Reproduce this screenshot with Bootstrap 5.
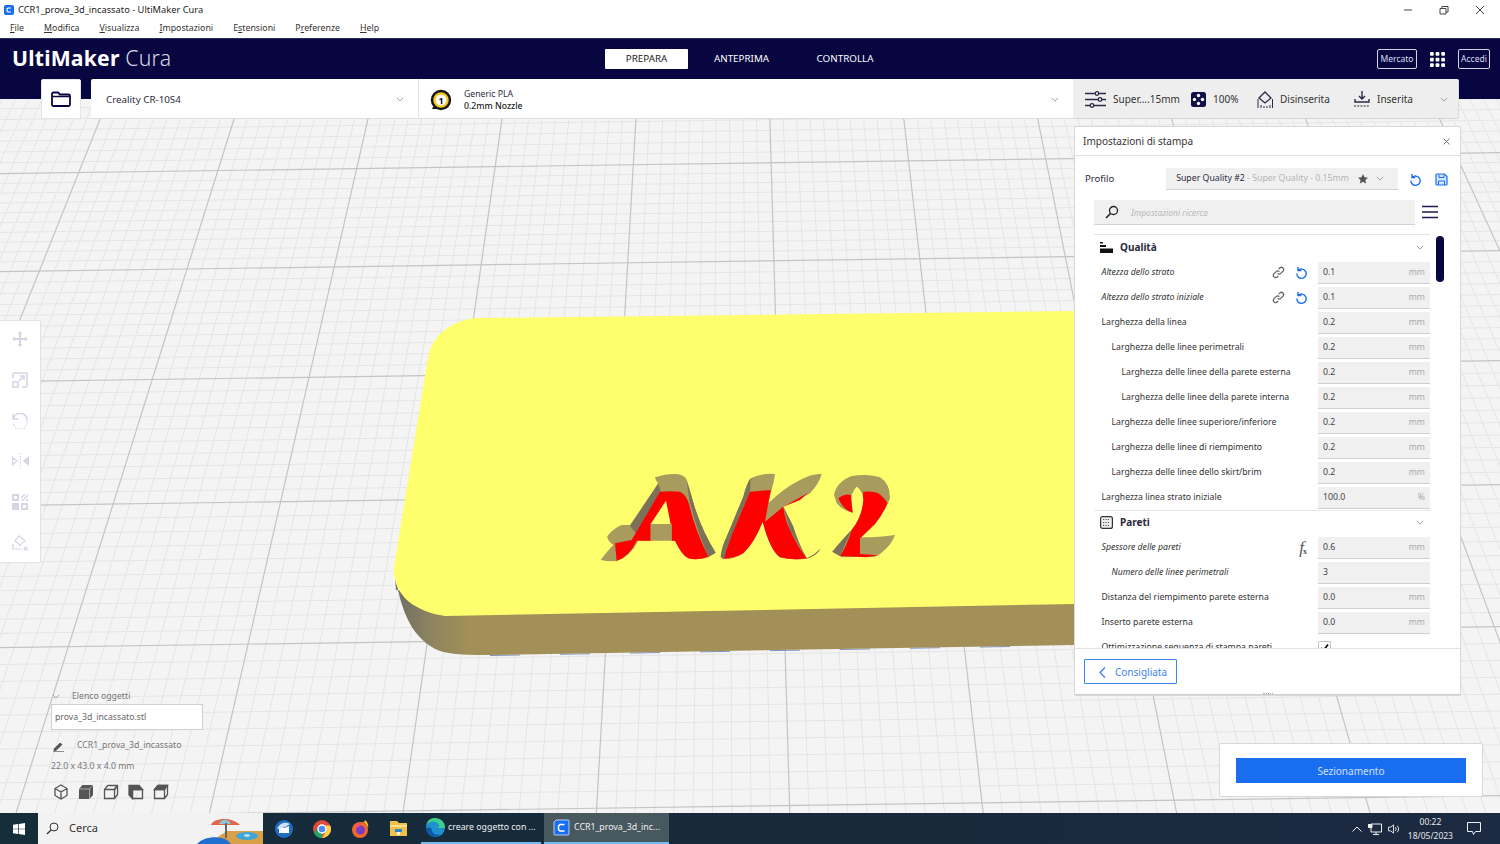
<!DOCTYPE html>
<html lang="it">
<head>
<meta charset="UTF-8">
<title>CCR1_prova_3d_incassato - UltiMaker Cura</title>
<link rel="stylesheet" href="https://cdn.jsdelivr.net/npm/bootstrap@5.3.0/dist/css/bootstrap.min.css">
<style>
html, body { height: 100%; overflow: hidden; }
body { font-family: "Noto Sans", sans-serif; font-size: 9px; color: #2c2c3c; background: #f4f4f4; width: 1500px; height: 844px; }
svg { display: block; flex: none; }
.win-title { height: 19px; background: #fff; padding: 0 2px 0 4px; font-size: 9.3px; color: #222; }
.win-ctrl { width: 36px; }
.win-menu { height: 19px; background: #fff; font-size: 8.8px; color: #333; padding-left: 10px; gap: 20px; }
.win-menu u { text-underline-offset: 1px; }
.work { height: 775px; }
.scene { position: absolute; inset: 0; }
.cura-head { height: 61px; background: #080640; position: relative; color: #fff; padding: 0 10px 20px 12px; border-top: 1px solid #2a2860; }
.logo-text { font-size: 21.2px; line-height: 1; letter-spacing: .2px; font-weight: 700; padding-bottom: 2px; }
.logo-text span { font-weight: 300; color: #d8d8e4; }
.stage-tabs { position: absolute; left: 605px; top: 10px; }
.stage-tab { height: 20px; font-size: 9.8px; color: #fff; display: flex; align-items: center; justify-content: center; }
.stage-tab.on { background: #fff; color: #222; border-radius: 1px; width: 83px; }
.stage-tab.wide { width: 57px; margin-left: 25px; }
.stage-tab.ctl { width: 60px; margin-left: 45px; }
.head-actions { gap: 13px; }
.head-btn { height: 20px; border: 1px solid #d4d4e0; border-radius: 2px; font-size: 8.5px; display: flex; align-items: center; justify-content: center; color: #dcdcec; }
.head-btn.market { width: 40px; }
.head-btn.login { width: 32px; }
.tool-row { position: relative; margin-top: -20px; height: 40px; padding-left: 41px; }
.folder-btn { width: 40px; height: 40px; background: #fff; border-radius: 2px; border: 1px solid #e4e4e4; margin-right: 10px; }
.machine-box { width: 328px; background: #fff; border-right: 1px solid #e2e2e2; font-size: 9.8px; padding: 1px 14px 0 15px; border-radius: 2px 0 0 2px; border-bottom: 1px solid #ddd; }
.machine-box span { padding-top: 2px; }
.material-box { width: 654px; background: #fff; padding: 2px 14px 0 11px; font-size: 8.7px; line-height: 11.5px; border-bottom: 1px solid #ddd; }
.material-box b { font-weight: 500; color: #222; }
.material-text { margin-left: 4px; padding-top: 2px; }
.print-box { width: 386px; background: #eeeeee; border-radius: 0 2px 2px 0; border-bottom: 1px solid #d5d5d5; border-right: 1px solid #ddd; padding: 1px 0 0 12px; font-size: 10px; color: #333; }
.print-box svg { margin-right: 7px; }
.print-box svg.tail { margin-right: 10px; margin-left: auto; }
.pb-super { width: 78px; }
.pb-infill { width: 44px; }
.pb-support { width: 74px; }
.settings-panel { position: absolute; left: 1074px; top: 88px; width: 387px; height: 570px; background: #fff; border: 1px solid #d8d8d8; border-radius: 2px; }
.panel-top { height: 29px; border-bottom: 1px solid #e0e0e0; padding: 0 10px 0 8px; font-size: 10px; color: #333; }
.profile-row { height: 24px; margin-top: 11px; padding-left: 10px; font-size: 9.5px; }
.profile-pick { width: 232px; height: 22px; margin-left: 52px; background: #f0f0f0; border-bottom: 1px solid #d4d4d4; padding: 0 10px; font-size: 8.75px; white-space: nowrap; }
.profile-pick i { font-style: normal; color: #b5b5b5; }
.profile-reset { margin-left: 11px; }
.profile-save { margin-left: 13px; }
.search-row { margin-top: 9px; padding-left: 19px; height: 25px; }
.search-box { width: 321px; height: 25px; background: #f0f0f0; border-bottom: 1px solid #d4d4d4; padding-left: 11px; font-style: italic; color: #b8b8b8; font-size: 8.5px; }
.search-box span { margin: 2px 0 0 4px; }
.search-menu { margin: -2px 0 0 7px; }
.set-scroll { position: absolute; left: 19px; right: 30px; top: 107px; height: 414px; overflow: hidden; border-top: 1px solid #e4e4e4; }
.scroll-thumb { position: absolute; left: 361px; top: 109px; width: 8px; height: 46px; border-radius: 4px; background: #080640; }
.cat-row { height: 25px; padding: 0 6px; font-size: 10px; font-weight: 700; color: #2a2a3a; gap: 7px; border-bottom: 1px solid transparent; }
.cat-row.next { border-top: 1px solid #e8e8e8; height: 25px; }
.set-row { height: 25px; padding-left: 7.5px; font-size: 8.7px; color: #333; white-space: nowrap; }
.lvl1 { padding-left: 17.5px; }
.lvl2 { padding-left: 27.5px; }
.set-row.edit { font-style: italic; }
.set-val { width: 112px; height: 22px; margin-left: auto; background: #f0f0f0; border-bottom: 1px solid #cfcfcf; font-style: normal; padding: 2px 5px 0 5px; display: flex; align-items: center; justify-content: space-between; color: #444; }
.set-val span { color: #a8a8a8; }
.set-icons { margin-left: auto; gap: 10px; margin-right: 10px; }
.set-icons + .set-val { margin-left: 0; }
.fx-mark { font-family: "Liberation Serif", serif; font-size: 17px; font-style: italic; color: #555; margin-left: auto; margin-right: 10px; line-height: 1; }
.fx-mark sub { font-size: 8px; font-style: normal; font-weight: 700; left: -1px; bottom: -.1em; }
.fx-mark + .set-val { margin-left: 0; }
.check-box { width: 13px; height: 13px; border: 1px solid #c4c4c4; background: #fff; border-radius: 1px; margin-left: auto; margin-right: 99px; display: flex; align-items: center; justify-content: center; }
.panel-foot { position: absolute; left: 0; right: 0; bottom: 0; height: 47px; border-top: 1px solid #e2e2e2; background: #fff; border-bottom: 1px solid #d0d0d0; padding-left: 9px; }
.back-btn { width: 93px; height: 25px; border: 1px solid #196ef0; color: #196ef0; border-radius: 1px; font-size: 10px; gap: 9px; padding: 1px 0 0 14px; opacity: .85; }
.drag-dots { position: absolute; left: 188px; bottom: 0; width: 10px; height: 1px; border-top: 1px dotted #aaa; }
.tool-strip { position: absolute; left: 0; top: 282px; width: 41px; height: 243px; background: #fff; border: 1px solid #e2e2e2; border-left: 0; border-radius: 0 2px 2px 0; padding: 10px 0 11px; justify-content: space-between; align-items: center; }
.obj-info { position: absolute; left: 51px; top: 651px; width: 152px; font-size: 8.7px; color: #777; }
.obj-head { height: 15px; }
.obj-head svg { margin: 0 12px 0 1px; }
.obj-name { height: 26px; background: #fff; border: 1px solid #cfcfcf; padding: 1px 0 0 3px; color: #666; }
.obj-file { margin-top: 8px; height: 16px; }
.obj-file svg { margin: 0 13px 0 2px; }
.obj-size { margin-top: 6px; }
.obj-views { gap: 9px; margin: 11px 0 0 2px; }
.slice-box { position: absolute; left: 1219px; top: 705px; width: 264px; height: 54px; background: #fff; border: 1px solid #d8d8d8; border-radius: 2px; padding: 14px 16px 0; }
.slice-btn { height: 25px; background: #196ef0; color: #cfe0ff; font-size: 10px; padding-top: 1px; }
.task-bar { height: 31px; background: linear-gradient(90deg, #142d39 0%, #18293a 50%, #1c2a42 100%); color: #fff; position: relative; }
.start-btn { width: 38px; }
.task-search { width: 225px; height: 31px; background: #f2f2f2; color: #333; font-size: 11px; padding-left: 8px; gap: 10px; position: relative; overflow: hidden; margin-right: 2px; }
.task-art { position: absolute; right: 0; top: 0; }
.task-pin { width: 38px; }
.task-app { height: 31px; font-size: 8.8px; padding-left: 5px; gap: 3px; border-bottom: 2px solid #76b9ed; color: #f0f0f0; white-space: nowrap; }
.task-app.one { width: 120px; margin-left: 4px; margin-right: 3px; }
.task-app.two { width: 125px; background: #48585f; padding-left: 9px; gap: 4px; }
.tray { margin-left: auto; gap: 6px; padding-right: 19px; font-size: 8.5px; color: #e8e8e8; }
.clock { line-height: 14px; text-align: center; margin: 0 8px 0 2px; }
</style>
</head>
<body class="d-flex flex-column">

<svg width="0" height="0" class="position-absolute">
  <symbol id="ic-reset" viewBox="0 0 14 14"><path d="M3.2 1.2v3.6h3.6M3.4 4.8A5 5 0 1 1 2 8.2" fill="none" stroke="#196ef0" stroke-width="1.5"/></symbol>
  <symbol id="ic-link" viewBox="0 0 14 14"><g fill="none" stroke="#666" stroke-width="1.3"><path d="M6 8a2.4 2.4 0 0 0 3.4 0l2.4-2.4A2.4 2.4 0 0 0 8.4 2.2L7.2 3.4"/><path d="M8 6a2.4 2.4 0 0 0-3.4 0L2.2 8.4a2.4 2.4 0 0 0 3.4 3.4l1.2-1.2"/></g></symbol>
  <symbol id="ic-chev" viewBox="0 0 10 6"><path d="M1 1l4 4 4-4" fill="none" stroke="#888" stroke-width="1"/></symbol>
</svg>

<div class="win-title d-flex align-items-center">
  <svg width="10" height="10" viewBox="0 0 10 10" class="me-1"><rect width="10" height="10" rx="2" fill="#196ef0"/><path d="M7 3H4L3 4v2l1 1h3" fill="none" stroke="#fff" stroke-width="1.2"/></svg>
  <span>CCR1_prova_3d_incassato - UltiMaker Cura</span>
  <div class="ms-auto d-flex align-items-center">
    <div class="win-ctrl d-flex justify-content-center"><svg width="10" height="10"><path d="M1 5h8" stroke="#444"/></svg></div>
    <div class="win-ctrl d-flex justify-content-center"><svg width="10" height="10"><path d="M1 3.500h6v5.500H1zM3 3.500V1.500h6v5.500H7" fill="none" stroke="#444"/></svg></div>
    <div class="win-ctrl d-flex justify-content-center"><svg width="10" height="10"><path d="M1 1l8 8M9 1l-8 8" stroke="#444"/></svg></div>
  </div>
</div>
<div class="win-menu d-flex align-items-center">
  <span><u>F</u>ile</span><span><u>M</u>odifica</span><span><u>V</u>isualizza</span><span><u>I</u>mpostazioni</span><span>E<u>s</u>tensioni</span><span>P<u>r</u>eferenze</span><span><u>H</u>elp</span>
</div>

<div class="work position-relative">
  <svg id="scene" class="scene" width="1500" height="775" viewBox="0 38 1500 775"></svg>

  <div class="cura-head d-flex align-items-center">
    <div class="logo-text">UltiMaker <span>Cura</span></div>
    <div class="stage-tabs d-flex">
      <div class="stage-tab on">PREPARA</div>
      <div class="stage-tab wide">ANTEPRIMA</div>
      <div class="stage-tab ctl">CONTROLLA</div>
    </div>
    <div class="ms-auto d-flex align-items-center head-actions">
      <div class="head-btn market">Mercato</div>
      <svg width="15" height="15" viewBox="0 0 16 16" fill="#fff"><rect x="0" y="0" width="4" height="4" rx="1"/><rect x="6" y="0" width="4" height="4" rx="1"/><rect x="12" y="0" width="4" height="4" rx="1"/><rect x="0" y="6" width="4" height="4" rx="1"/><rect x="6" y="6" width="4" height="4" rx="1"/><rect x="12" y="6" width="4" height="4" rx="1"/><rect x="0" y="12" width="4" height="4" rx="1"/><rect x="6" y="12" width="4" height="4" rx="1"/><rect x="12" y="12" width="4" height="4" rx="1"/></svg>
      <div class="head-btn login">Accedi</div>
    </div>
  </div>

  <div class="tool-row d-flex">
    <div class="folder-btn d-flex align-items-center justify-content-center">
      <svg width="20" height="16" viewBox="0 0 20 16"><path d="M1 3a1.500 1.500 0 0 1 1.500-1.500h4.500L9 3.500h8.500A1.500 1.500 0 0 1 19 5v8.500a1.500 1.500 0 0 1-1.500 1.500h-15A1.500 1.500 0 0 1 1 13.500z" fill="none" stroke="#080640" stroke-width="1.800"/><path d="M1.500 5.500h17" stroke="#080640" stroke-width="1.500"/></svg>
    </div>
    <div class="machine-box d-flex align-items-center justify-content-between">
      <span>Creality CR-10S4</span>
      <svg width="8" height="5"><use href="#ic-chev"/></svg>
    </div>
    <div class="material-box d-flex align-items-center">
      <svg width="22" height="22" viewBox="0 0 22 22" class="me-2"><circle cx="11" cy="11" r="9" fill="#f5c518" stroke="#151515" stroke-width="2.400"/><path d="M2 20h5v-2H3z" fill="#151515"/><circle cx="11" cy="11" r="5.500" fill="#fff"/><text x="11" y="14.500" font-size="9" font-weight="700" text-anchor="middle" fill="#111" font-family="Noto Sans">1</text></svg>
      <div class="material-text"><div>Generic PLA</div><b>0.2mm Nozzle</b></div>
      <svg width="8" height="5" class="ms-auto"><use href="#ic-chev"/></svg>
    </div>
    <div class="print-box d-flex align-items-center">
      <svg width="21" height="17" viewBox="0 0 21 17"><g stroke="#2a2a4a" stroke-width="1.300" fill="#eee"><path d="M0 2.500h21M0 8.500h21M0 14.500h21"/><circle cx="12" cy="2.500" r="1.800"/><circle cx="15" cy="8.500" r="1.800"/><circle cx="7" cy="14.500" r="1.800"/></g></svg>
      <span class="pb-super">Super....15mm</span>
      <svg width="15" height="15" viewBox="0 0 15 15"><rect width="15" height="15" rx="2.500" fill="#121048"/><g fill="#fff"><circle cx="7.500" cy="3.500" r="1.700"/><circle cx="3.500" cy="7.500" r="1.700"/><circle cx="11.500" cy="7.500" r="1.700"/><circle cx="7.500" cy="11.500" r="1.700"/></g></svg>
      <span class="pb-infill">100%</span>
      <svg width="16" height="17" viewBox="0 0 16 17"><path d="M8 1l6 6-6 5-6-5z" fill="none" stroke="#2a2a4a" stroke-width="1.300"/><path d="M1 17V8M4 17v-3M7 17v-2M10 17v-2M13 17v-3M15.500 17V8" stroke="#2a2a4a"/></svg>
      <span class="pb-support">Disinserita</span>
      <svg width="16" height="16" viewBox="0 0 16 16"><path d="M8 0v8M5 5l3 3 3-3M1 8v3h14V8" fill="none" stroke="#2a2a4a" stroke-width="1.400"/><path d="M0 15h16" stroke="#2a2a4a" stroke-dasharray="2 1.200"/></svg>
      <span>Inserita</span>
      <svg width="8" height="5" class="tail"><use href="#ic-chev"/></svg>
    </div>
  </div>

  <div class="settings-panel">
    <div class="panel-top d-flex align-items-center justify-content-between">
      <span>Impostazioni di stampa</span>
      <svg width="7" height="7"><path d="M0.500 0.500l6 6M6.500 0.500l-6 6" stroke="#777"/></svg>
    </div>
    <div class="profile-row d-flex align-items-center">
      <span>Profilo</span>
      <div class="profile-pick d-flex align-items-center">
        <span>Super Quality #2 <i>- Super Quality - 0.15mm</i></span>
        <svg width="10" height="10" viewBox="0 0 10 10" class="ms-auto"><path d="M5 0l1.500 3.300 3.500.4-2.600 2.300.8 3.500L5 7.700 1.800 9.500l.8-3.500L0 3.700l3.500-.4z" fill="#555"/></svg>
        <svg width="8" height="5" class="ms-2 me-1"><use href="#ic-chev"/></svg>
      </div>
      <svg width="13" height="13" class="profile-reset"><use href="#ic-reset"/></svg>
      <svg width="13" height="13" viewBox="0 0 13 13" class="profile-save"><path d="M1 2a1 1 0 0 1 1-1h7.500L12 3.500V11a1 1 0 0 1-1 1H2a1 1 0 0 1-1-1z" fill="#d4e4fb" stroke="#196ef0" stroke-width="1.200"/><path d="M4 1.500v3h5v-3M3.500 12V8h6v4" fill="none" stroke="#196ef0"/></svg>
    </div>
    <div class="search-row d-flex align-items-center">
      <div class="search-box d-flex align-items-center">
        <svg width="14" height="14" viewBox="0 0 14 14" class="me-2"><circle cx="8.500" cy="5.500" r="4" fill="none" stroke="#222" stroke-width="1.300"/><path d="M5.500 8.500L1 13" stroke="#222" stroke-width="1.600"/></svg>
        <span>Impostazioni ricerca</span>
      </div>
      <svg width="16" height="14" viewBox="0 0 16 14" class="search-menu"><path d="M0 1.500h16M0 7h16M0 12.500h16" stroke="#1c1a50" stroke-width="1.500"/></svg>
    </div>

    <div class="set-scroll">
      <div class="cat-row d-flex align-items-center">
        <svg width="13" height="11" viewBox="0 0 13 11"><path d="M0 0h3v1.500H0zM0 3h6v2H0zM0 6.500h13V11H0z" fill="#111"/></svg>
        <span>Qualità</span>
        <svg width="8" height="5" class="ms-auto me-0"><use href="#ic-chev"/></svg>
      </div>
      <div class="set-row edit d-flex align-items-center"><span>Altezza dello strato</span><div class="set-icons d-flex"><svg width="13" height="13"><use href="#ic-link"/></svg><svg width="13" height="13"><use href="#ic-reset"/></svg></div><div class="set-val">0.1<span>mm</span></div></div>
      <div class="set-row edit d-flex align-items-center"><span>Altezza dello strato iniziale</span><div class="set-icons d-flex"><svg width="13" height="13"><use href="#ic-link"/></svg><svg width="13" height="13"><use href="#ic-reset"/></svg></div><div class="set-val">0.1<span>mm</span></div></div>
      <div class="set-row d-flex align-items-center"><span>Larghezza della linea</span><div class="set-val">0.2<span>mm</span></div></div>
      <div class="set-row lvl1 d-flex align-items-center"><span>Larghezza delle linee perimetrali</span><div class="set-val">0.2<span>mm</span></div></div>
      <div class="set-row lvl2 d-flex align-items-center"><span>Larghezza delle linee della parete esterna</span><div class="set-val">0.2<span>mm</span></div></div>
      <div class="set-row lvl2 d-flex align-items-center"><span>Larghezza delle linee della parete interna</span><div class="set-val">0.2<span>mm</span></div></div>
      <div class="set-row lvl1 d-flex align-items-center"><span>Larghezza delle linee superiore/inferiore</span><div class="set-val">0.2<span>mm</span></div></div>
      <div class="set-row lvl1 d-flex align-items-center"><span>Larghezza delle linee di riempimento</span><div class="set-val">0.2<span>mm</span></div></div>
      <div class="set-row lvl1 d-flex align-items-center"><span>Larghezza delle linee dello skirt/brim</span><div class="set-val">0.2<span>mm</span></div></div>
      <div class="set-row d-flex align-items-center"><span>Larghezza linea strato iniziale</span><div class="set-val">100.0<span>%</span></div></div>
      <div class="cat-row next d-flex align-items-center">
        <svg width="13" height="13" viewBox="0 0 13 13"><rect x=".6" y=".6" width="11.800" height="11.800" rx="2" fill="#eee" stroke="#333" stroke-width="1.200"/><path d="M3 3.500h7M3 6.500h7M3 9.500h7" stroke="#555" stroke-dasharray="1.200 1.200"/></svg>
        <span>Pareti</span>
        <svg width="8" height="5" class="ms-auto me-0"><use href="#ic-chev"/></svg>
      </div>
      <div class="set-row edit d-flex align-items-center"><span>Spessore delle pareti</span><div class="fx-mark">f<sub>x</sub></div><div class="set-val">0.6<span>mm</span></div></div>
      <div class="set-row edit lvl1 d-flex align-items-center"><span>Numero delle linee perimetrali</span><div class="set-val">3</div></div>
      <div class="set-row d-flex align-items-center"><span>Distanza del riempimento parete esterna</span><div class="set-val">0.0<span>mm</span></div></div>
      <div class="set-row d-flex align-items-center"><span>Inserto parete esterna</span><div class="set-val">0.0<span>mm</span></div></div>
      <div class="set-row d-flex align-items-center"><span>Ottimizzazione sequenza di stampa pareti</span><div class="check-box"><svg width="9" height="9" viewBox="0 0 9 9"><path d="M1 5l2.500 2.500L8 1.500" fill="none" stroke="#111" stroke-width="1.800"/></svg></div></div>
    </div>
    <div class="scroll-thumb"></div>

    <div class="panel-foot d-flex align-items-center">
      <div class="back-btn d-flex align-items-center">
        <svg width="7" height="11" viewBox="0 0 7 11"><path d="M6 0.500L1 5.500l5 5" fill="none" stroke="#196ef0" stroke-width="1.300"/></svg>
        <span>Consigliata</span>
      </div>
      <div class="drag-dots"></div>
    </div>
  </div>

  <div class="tool-strip d-flex flex-column">
    <svg width="16" height="16" viewBox="0 0 16 16" fill="#d5d5e6"><path d="M8 0l2.500 3h-5zM8 16l-2.500-3h5zM0 8l3-2.500v5zM16 8l-3 2.500v-5z"/><path d="M7 3h2v10H7zM3 7h10v2H3z"/></svg>
    <svg width="16" height="16" viewBox="0 0 16 16" fill="none" stroke="#d5d5e6" stroke-width="1.600"><path d="M1 6V2a1 1 0 0 1 1-1h12a1 1 0 0 1 1 1v12a1 1 0 0 1-1 1h-4"/><rect x="1" y="10" width="5" height="5"/><path d="M7 9l5-5M8 4h4v4"/></svg>
    <svg width="16" height="16" viewBox="0 0 16 16" fill="none" stroke="#d5d5e6" stroke-width="1.500"><path d="M1 1v5h5"/><path d="M1.500 6A6.500 6.500 0 0 1 15 8"/><path d="M15 9A6.500 6.500 0 0 1 1.500 10" stroke-dasharray="1.500 1.500"/></svg>
    <svg width="17" height="16" viewBox="0 0 17 16" fill="#d5d5e6"><path d="M0 3l6 5-6 5zM1.500 6v4L4 8z" fill-rule="evenodd"/><path d="M17 3l-6 5 6 5z"/><path d="M8.500 0v16" stroke="#d5d5e6" stroke-dasharray="1.500 1.500" fill="none"/></svg>
    <svg width="16" height="16" viewBox="0 0 16 16" fill="#d5d5e6"><path d="M0 0h7v7H0zM2 2v3h3V2z" fill-rule="evenodd"/><path d="M9 7l7-7v2l-5 5zM9 3l3-3h2L9 5zM13 7l3-3v3z"/><path d="M0 9h7v7H0zM9 9h7v7H9zM11 11v3h3v-3z" fill-rule="evenodd"/></svg>
    <svg width="16" height="16" viewBox="0 0 16 16" fill="none" stroke="#d5d5e6" stroke-width="1.200"><path d="M7 0.800l6 5-5 4.500-5-4.500z"/><path d="M1 15V9M4 15v-2M7 15v-2M10 15v-1" stroke-width="1.300"/><path d="M12 12l3.500 3.500M15.500 12L12 15.500"/></svg>
  </div>

  <div class="obj-info">
    <div class="obj-head d-flex align-items-center">
      <svg width="8" height="5"><use href="#ic-chev"/></svg><span>Elenco oggetti</span>
    </div>
    <div class="obj-name d-flex align-items-center">prova_3d_incassato.stl</div>
    <div class="obj-file d-flex align-items-center">
      <svg width="11" height="11" viewBox="0 0 11 11"><path d="M1 8L7 2l2 1.500L3 9.500H1zM0 10.700h11" fill="#555" stroke="#555" stroke-width=".8"/></svg><span>CCR1_prova_3d_incassato</span>
    </div>
    <div class="obj-size">22.0 x 43.0 x 4.0 mm</div>
    <div class="obj-views d-flex">
      <svg width="16" height="16" viewBox="0 0 16 16" fill="none" stroke="#555" stroke-width="1.300"><path d="M8 1l6 3.500v7L8 15l-6-3.500v-7zM2 4.500L8 8l6-3.500M8 8v7"/></svg>
      <svg width="16" height="16" viewBox="0 0 16 16"><path d="M4.500 1H15v10l-3.500 4H1V5z" fill="#555"/><path d="M1 5h10.500l3.500-4M11.500 5v10" fill="none" stroke="#ddd" stroke-width=".6"/></svg>
      <svg width="16" height="16" viewBox="0 0 16 16" fill="none" stroke="#555" stroke-width="1.300"><path d="M1.500 5.500h10v9h-10zM1.500 5.500L5 1.500h9.500v9l-3 4"/><path d="M14.500 1.500l-3 4" stroke-width="2"/></svg>
      <svg width="16" height="16" viewBox="0 0 16 16" fill="none" stroke="#555" stroke-width="1.300"><path d="M4.500 5.500h10v9h-10z"/><path d="M4.500 14.500L1 11V1.500h10l3.500 4H4.500z" fill="#555"/></svg>
      <svg width="16" height="16" viewBox="0 0 16 16" fill="none" stroke="#555" stroke-width="1.300"><path d="M1.500 5.500h10v9h-10zM1.500 5.500L5 1.500h9.500v9l-3 4"/><path d="M5 1.500h9.500l-3 4h-10z" fill="#555"/></svg>
    </div>
  </div>

  <div class="slice-box"><div class="slice-btn d-flex align-items-center justify-content-center">Sezionamento</div></div>
</div>

<div class="task-bar d-flex align-items-center">
  <div class="start-btn d-flex justify-content-center"><svg width="12" height="12" viewBox="0 0 12 12" fill="#fff"><path d="M0 1.800L5 1v4.700H0zM5.700 .9L12 0v5.700H5.700zM0 6.300h5V11l-5-.8zM5.700 6.300H12V12l-6.300-.9z"/></svg></div>
  <div class="task-search d-flex align-items-center">
    <svg width="13" height="13" viewBox="0 0 13 13"><circle cx="8" cy="5" r="4" fill="none" stroke="#333"/><path d="M5 8l-4 4" stroke="#333" stroke-width="1.200"/></svg>
    <span>Cerca</span>
    <svg class="task-art" width="66" height="31" viewBox="0 0 66 31"><path d="M30 18h36v13H10z" fill="#d9a04a"/><path d="M0 31c8-8 22-8 30-4l4 4z" fill="#1f6fd0"/><path d="M14 12c2-7 20-9 29 0z" fill="#e0674a"/><path d="M22 11c2-5 9-6 12 0z" fill="#8ac6dc"/><path d="M28 10h2v15h-2z" fill="#666"/><ellipse cx="50" cy="23" rx="11" ry="4" fill="#3fa7d6"/><ellipse cx="50" cy="22.500" rx="3" ry="1.200" fill="#cfe4ee"/></svg>
  </div>
  <div class="task-pin d-flex justify-content-center"><svg width="18" height="18" viewBox="0 0 18 18"><circle cx="9" cy="9" r="9" fill="#1d6fc4"/><path d="M4 6l5 2 5-2v7H4z" fill="#fff"/><path d="M2 9c2-5 7-8 13-5l-5 3z" fill="#cfe3f6"/></svg></div>
  <div class="task-pin d-flex justify-content-center"><svg width="18" height="18" viewBox="0 0 18 18"><circle cx="9" cy="9" r="9" fill="#dd4b3e"/><path d="M9 18a9 9 0 0 1-7.800-4.500L5.500 6 9 12z" fill="#1fa463"/><path d="M17.800 7A9 9 0 0 1 9 18l4.500-8L12 5.500h5z" fill="#ffce43"/><circle cx="9" cy="9" r="4" fill="#4a8af4" stroke="#fff" stroke-width="1.400"/></svg></div>
  <div class="task-pin d-flex justify-content-center"><svg width="18" height="18" viewBox="0 0 18 18"><circle cx="9" cy="10" r="8" fill="#f0692a"/><path d="M9 2c4 0 6 1 8 6 1-3-1-7-3-8 0 2-1 2-5 2z" fill="#ffb428"/><circle cx="9.500" cy="10" r="4.500" fill="#7a3dc8"/><path d="M5 8c-2-3 2-6 6-5-2 0-2 2-2 3z" fill="#ff4d6d"/></svg></div>
  <div class="task-pin d-flex justify-content-center"><svg width="17" height="15" viewBox="0 0 17 15"><path d="M0 0h7l2 2h8v13H0z" fill="#f0c14a"/><path d="M0 4h17v2H0z" fill="#fbe08a"/><path d="M5 8h7v3H5z" fill="#2f87d6"/><path d="M7 11h3v3H7z" fill="#f5f5f5"/></svg></div>
  <div class="task-app one d-flex align-items-center">
    <svg width="19" height="19" viewBox="0 0 19 19"><circle cx="9.500" cy="9.500" r="9.500" fill="#1e8fcf"/><path d="M19 10C19 4 14 0 9 0 4 0 1 3 .5 7 3 3 10 2 13 7c1 2-1 3-3 3z" fill="#3dd08c"/><path d="M6 12c0 4 5 6 9 4-5 5-14 3-15-5 1-2 4-3 6 1z" fill="#0c5aa6"/></svg>
    <span>creare oggetto con ...</span>
  </div>
  <div class="task-app two d-flex align-items-center">
    <svg width="17" height="17" viewBox="0 0 17 17"><path d="M3 1h12a1 1 0 0 1 1 1v13a1 1 0 0 1-1 1H2a1 1 0 0 1-1-1V3z" fill="#196ef0" stroke="#dce8fb" stroke-width=".8"/><path d="M11.500 5.500H7L5.500 7v3.500L7 12h4.500" fill="none" stroke="#fff" stroke-width="1.500"/></svg>
    <span>CCR1_prova_3d_inc...</span>
  </div>
  <div class="tray d-flex align-items-center">
    <svg width="10" height="6" viewBox="0 0 10 6"><path d="M.5 5.500L5 1l4.500 4.500" fill="none" stroke="#eee"/></svg>
    <svg width="14" height="12" viewBox="0 0 14 12" fill="none" stroke="#eee"><path d="M3 1h10.500v8H3zM8 9v2.500M5 11.500h6"/><path d="M0 1.500h4v3H0z" fill="#eee"/></svg>
    <svg width="12" height="12" viewBox="0 0 13 12" fill="none" stroke="#eee"><path d="M.5 4v4h2.500L6 10.500v-9L3 4zM8 4a3 3 0 0 1 0 4M10 2.500a5 5 0 0 1 0 7"/></svg>
    <div class="clock"><div>00:22</div><div>18/05/2023</div></div>
    <svg width="14" height="13" viewBox="0 0 14 13"><path d="M.5.500h13v9H8.500L6.500 12.500 5.500 9.500h-5z" fill="none" stroke="#eee"/></svg>
  </div>
</div>

<script>
  // build bed grid and the sliced model into the scene svg
  const ns = "http://www.w3.org/2000/svg";
  const scene = document.getElementById("scene");
  function add(tag, attrs, parent) {
    const el = document.createElementNS(ns, tag);
    for (const k in attrs) el.setAttribute(k, attrs[k]);
    (parent || scene).appendChild(el);
    return el;
  }
  add("rect", { x: 0, y: 38, width: 1500, height: 775, fill: "#f4f4f4" });

  const vx = 725, vy = -1444;
  const majors = [60, 168, 266, 376, 500, 642, 811, 1010];
  const lines = [];
  for (let i = -100; i <= 100; i++) {
    const k = -0.1427 + i * 0.00857;
    lines.push({ x1: vx + (60 - vy) * k, y1: 60, x2: vx + (813 - vy) * k, y2: 813, major: i % 10 === 0 });
  }
  for (let m = 0; m < majors.length - 1; m++) {
    for (let j = 0; j < 10; j++) {
      const y = majors[m] + (majors[m + 1] - majors[m]) * j / 10;
      const s = -0.014;
      lines.push({ x1: 0, y1: y + 400 * -s, x2: 1500, y2: y + 1100 * s, major: j === 0 });
    }
  }
  lines.filter(l => !l.major).forEach(l => add("line", { x1: l.x1, y1: l.y1, x2: l.x2, y2: l.y2, stroke: "#e5e5e5", "stroke-width": 1 }));
  lines.filter(l => l.major).forEach(l => add("line", { x1: l.x1, y1: l.y1, x2: l.x2, y2: l.y2, stroke: "#c4c4c4", "stroke-width": 1.2 }));

  const defs = add("defs", {});
  const grad = add("linearGradient", { id: "sideShade", x1: "396", x2: "470", y1: "0", y2: "0", gradientUnits: "userSpaceOnUse" }, defs);
  add("stop", { offset: "0", "stop-color": "#706d62" }, grad);
  add("stop", { offset: "0.5", "stop-color": "#8f8560" }, grad);
  add("stop", { offset: "1", "stop-color": "#a38f58" }, grad);

  // plate side and top face
  add("line", { x1: 490, y1: 655.500, x2: 1010, y2: 646.500, stroke: "#7d92c4", "stroke-width": 1, "stroke-dasharray": "30 40" });
  add("path", { d: "M394 565L397 585C402 610 412 640 440 651C452 655 470 655 490 655L1074 645V590H396Z", fill: "url(#sideShade)" });
  add("path", { d: "M477 318L1074 311V604L445 616C415 612 392 595 394 567L428 357C432 335 452 320 477 318Z", fill: "#ffff6e" });

  // engraved shapes of the model, coordinates taken at 3x around (580,450)
  const g = add("g", { transform: "translate(580 450) scale(.33333)" });
  const wall = "#a99a5e", floor = "#ff0000", dark = "#7b7259", face = "#ffff6e";
  const polys = [
    // first shape: walls then floor
    [wall, "M62 330Q80 305 100 285Q80 270 82 258Q100 235 125 225L150 225L235 100Q225 90 225 82Q260 70 290 72Q315 75 320 90Q335 140 345 175Q370 250 407 308L385 322Q350 332 325 325Q305 315 285 272L175 272Q150 320 110 333Q85 335 62 330Z"],
    [dark, "M150 228L235 100L242 125L168 250ZM320 90Q335 140 345 175Q370 250 407 308L385 320Q350 240 328 150Z"],
    [floor, "M240 125Q270 122 300 125Q320 135 328 165Q345 240 385 320Q350 332 325 325Q305 315 285 272L275 272L275 222L212 222L212 272L170 272Q150 318 110 333L105 280L155 270Z"],
    [face, "M258 152L212 222L272 222Z"],
    [wall, "M212 222L275 222L275 270L212 270Z"],
    // second shape
    [wall, "M422 322Q425 290 440 260L490 140Q500 100 512 85Q550 68 585 72Q582 95 575 120L565 160Q610 115 660 90Q695 70 725 72Q718 100 690 130L610 170Q630 210 640 230Q655 280 680 325Q705 315 722 295Q710 318 680 326Q640 332 600 322Q570 300 548 215Q525 275 490 310Q465 328 430 328Z"],
    [dark, "M422 322Q425 290 440 260L490 140Q500 100 512 85L510 125L470 220L432 326ZM610 170Q630 210 640 230Q655 280 680 325Q705 315 722 295Q710 318 680 326L630 240Z"],
    [floor, "M510 125L572 120L555 215L610 170Q615 210 630 240Q650 285 680 325Q640 332 600 322Q570 300 548 215Q525 275 490 310Q465 325 432 326Q445 280 470 220ZM610 170L685 128L660 150Z"],
    // third shape
    [wall, "M762 135Q770 95 815 78Q860 70 900 82Q930 100 930 145Q915 185 885 222L845 262Q900 262 945 255Q935 285 900 312L885 320L785 322L757 305Q790 265 815 240Q850 195 848 150Q845 120 830 110Q815 125 815 150Q818 170 818 188Q785 180 770 160Z"],
    [floor, "M775 145Q795 130 812 135Q815 165 818 188Q790 180 775 145ZM850 125Q880 122 895 130Q915 145 922 160Q910 190 885 222L840 265L840 312L895 316L860 322L780 318Q800 290 815 240Q850 195 848 150Z"],
    [dark, "M757 305Q790 265 815 240L780 318Z"],
    [face, "M830 110Q850 125 850 150Q848 170 840 190L820 188Q815 160 815 135Z"]
  ];
  polys.forEach(p => add("path", { d: p[1], fill: p[0] }, g));
</script>
<script src="https://cdn.jsdelivr.net/npm/bootstrap@5.3.0/dist/js/bootstrap.bundle.min.js"></script>
</body>
</html>
